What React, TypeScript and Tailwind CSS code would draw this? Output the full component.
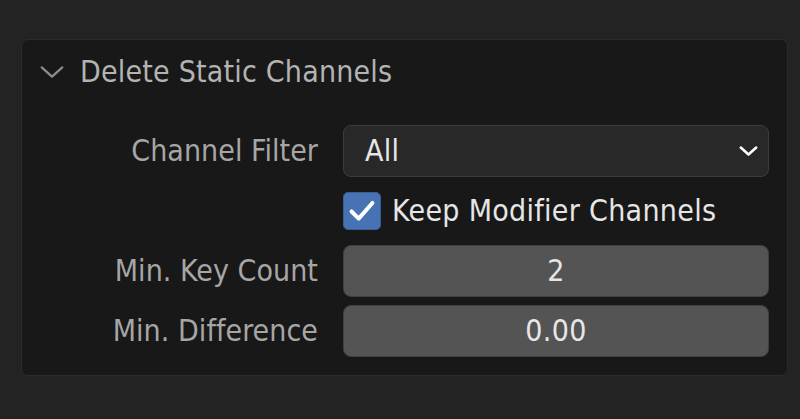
import React from 'react';

function Chevron({ className, width = 2 }: { className: string; width?: number }) {
  return (
    <svg viewBox="0 0 24 14" className={className} fill="none">
      <path d="M3 3 L12 11 L21 3" stroke="currentColor" strokeWidth={width} strokeLinecap="round" strokeLinejoin="round" />
    </svg>
  );
}

function Label({ text }: { text: string }) {
  return <div className="h-[52px] flex items-center justify-end text-[#a6a6a6] tracking-[0.05px]">{text}</div>;
}

export default function App() {
  return (
    <div className="w-[800px] h-[419px] bg-[#232323] pt-[39px] pl-[21px] pr-[12px] font-['DejaVu_Sans_Condensed','DejaVu_Sans',sans-serif] text-[30px] leading-none tracking-[0.3px]">
      <div className="bg-[#181818] border border-[#2b2b2b] rounded-[7px] pb-[18px]">
        <div className="h-[64px] flex items-center pl-[16px] text-[#b3b3b3]">
          <Chevron className="w-[28px] h-[16px] text-[#8c8c8c]" />
          <span className="ml-[14px] tracking-[0.2px]">Delete Static Channels</span>
        </div>
        <div className="grid grid-cols-[296px_1fr] gap-x-[25px] gap-y-[8px] pt-[21px] pr-[18px]">
          <Label text="Channel Filter" />
          <div className="h-[52px] flex items-center justify-between rounded-[8px] bg-[#282828] border border-[#3c3c3c] pl-[21px] pr-[9px] text-[#e6e6e6]">
            <span>All</span>
            <Chevron className="w-[21px] h-[12px] text-white" width={3} />
          </div>

          <div />
          <div className="h-[52px] flex items-center">
            <div className="w-[38px] h-[38px] rounded-[5px] bg-[#4772b3] border border-[#3a5e96] flex items-center justify-center">
              <svg viewBox="0 0 38 38" className="w-[38px] h-[38px]" fill="none">
                <path d="M8 19.5 L15.5 27 L30 10.5" stroke="white" strokeWidth="4.2" strokeLinecap="round" strokeLinejoin="round" />
              </svg>
            </div>
            <span className="ml-[11px] text-[#e6e6e6]">Keep Modifier Channels</span>
          </div>

          <Label text="Min. Key Count" />
          <div className="h-[52px] flex items-center justify-center rounded-[8px] bg-[#545454] border border-[#3f3f3f] text-[#e6e6e6]">2</div>

          <Label text="Min. Difference" />
          <div className="h-[52px] flex items-center justify-center rounded-[8px] bg-[#545454] border border-[#3f3f3f] text-[#e6e6e6]">0.00</div>
        </div>
      </div>
    </div>
  );
}
